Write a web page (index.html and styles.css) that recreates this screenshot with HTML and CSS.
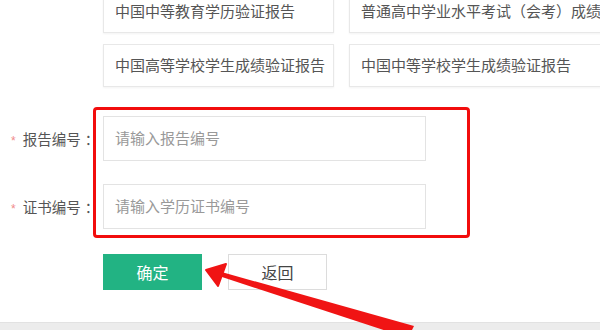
FILE: index.html
```html
<!DOCTYPE html>
<html lang="zh-CN">
<head>
    <meta charset="UTF-8">
    <meta name="viewport" content="width=device-width, initial-scale=1.0">
    <title>学历验证报告查询</title>
    <link rel="stylesheet" href="styles.css">
</head>
<body>
    <div class="page">
        <div class="report-types">
            <div class="type-card">中国中等教育学历验证报告</div>
            <div class="type-card">普通高中学业水平考试（会考）成绩验证报告</div>
            <div class="type-card">中国高等学校学生成绩验证报告</div>
            <div class="type-card">中国中等学校学生成绩验证报告</div>
        </div>

        <div class="query-form">
            <div class="form-row">
                <label class="form-label" for="reportNo"><span class="required">*</span>报告编号 ：</label>
                <input type="text" id="reportNo" class="form-input" placeholder="请输入报告编号">
            </div>
            <div class="form-row">
                <label class="form-label" for="certNo"><span class="required">*</span>证书编号 ：</label>
                <input type="text" id="certNo" class="form-input" placeholder="请输入学历证书编号">
            </div>
            <div class="highlight-box"></div>
        </div>

        <div class="actions">
            <button class="btn btn-primary">确定</button>
            <button class="btn btn-default">返回</button>
        </div>

        <div class="footer-bar"></div>

        <!-- 标注箭头 -->
        <svg class="pointer-arrow" width="600" height="330" viewBox="0 0 600 330">
            <polygon points="218,271 222,277 408,338 414,326" fill="#f01414"/>
            <polygon points="206,270 226,264 218,286" fill="#f01414" stroke="#f01414" stroke-width="2" stroke-linejoin="round"/>
        </svg>
    </div>
</body>
</html>
```

FILE: styles.css
```css
body {
    margin: 0;
    background-color: #fff;
    font-family: "Liberation Sans", "Noto Sans CJK SC", sans-serif;
    color: #555;
    overflow: hidden;
}
.page {
    position: relative;
    width: 600px;
    height: 330px;
    overflow: hidden;
}
.report-types {
    display: grid;
    grid-template-columns: 231px 300px;
    column-gap: 15px;
    row-gap: 11px;
    margin: -10px 0 0 103px;
}
.type-card {
    height: 43px;
    box-sizing: border-box;
    border: 1px solid #e8e8e8;
    box-shadow: 0 1px 2px rgba(0,0,0,0.05);
    padding-left: 11px;
    font-size: 15px;
    line-height: 41px;
    color: #555;
    white-space: nowrap;
    overflow: hidden;
}
.query-form {
    position: relative;
    margin-top: 29px;
}
.form-row {
    display: flex;
    align-items: center;
    margin-bottom: 23px;
}
.form-label {
    width: 103px;
    box-sizing: border-box;
    padding-left: 11px;
    font-size: 14.5px;
    color: #555;
    white-space: nowrap;
}
.required {
    color: #f08a8a;
    font-size: 12px;
    margin-right: 7px;
}
.form-input {
    width: 323px;
    height: 45px;
    box-sizing: border-box;
    border: 1px solid #e3e3e3;
    padding: 0 11px;
    font-family: inherit;
    font-size: 15px;
    color: #333;
    outline: none;
}
.form-input::placeholder {
    color: #999;
}
.form-row:last-of-type {
    margin-bottom: 0;
}
.highlight-box {
    position: absolute;
    left: 93px;
    top: -9px;
    width: 377px;
    height: 131px;
    box-sizing: border-box;
    border: 3px solid #f20d0d;
    border-radius: 4px;
}
.actions {
    display: flex;
    gap: 26px;
    margin: 25px 0 0 103px;
}
.btn {
    width: 99px;
    height: 36px;
    font-family: inherit;
    font-size: 16px;
    cursor: pointer;
}
.btn-primary {
    background-color: #22b383;
    border: none;
    color: #fff;
}
.btn-default {
    background-color: #fff;
    border: 1px solid #dcdcdc;
    color: #444;
}
.footer-bar {
    margin-top: 32px;
    height: 9px;
    background-color: #ececec;
    border-top: 1px solid #e2e2e2;
}
.pointer-arrow {
    position: absolute;
    left: 0;
    top: 0;
    pointer-events: none;
}
```
